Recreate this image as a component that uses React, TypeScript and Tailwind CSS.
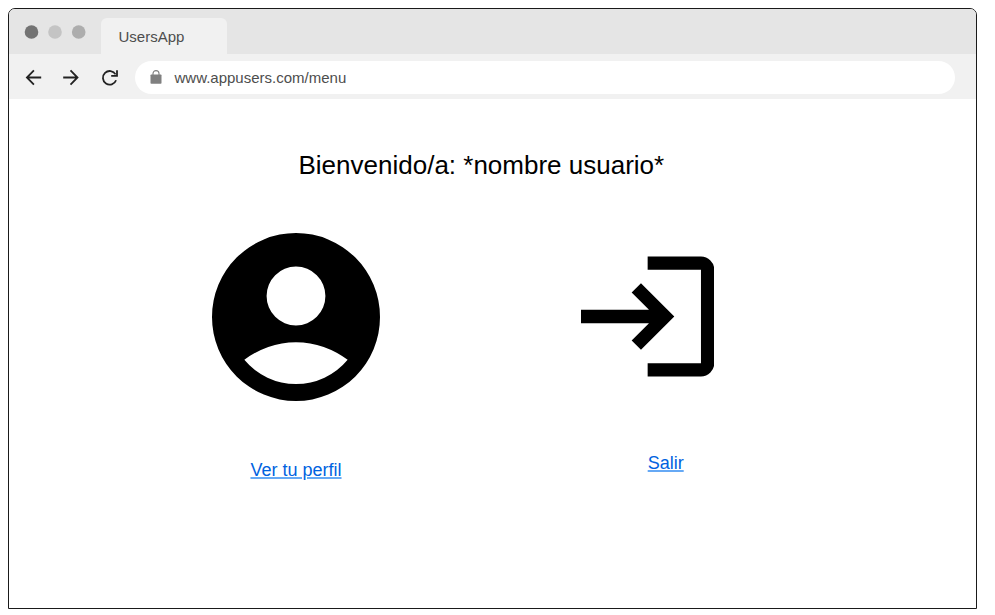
import React from "react";

function TitleBar() {
  return (
    <div className="flex h-[45px] items-end bg-[#e5e5e5] pl-[15px]">
      <svg className="h-[45px] w-[77px] shrink-0" viewBox="0 0 77 45">
        <circle cx="7.5" cy="23" r="6.8" fill="#737373" />
        <circle cx="31" cy="23" r="6.8" fill="#c4c4c4" />
        <circle cx="54.7" cy="23" r="6.8" fill="#adadad" />
      </svg>
      <div className="flex h-[36px] w-[126px] items-center rounded-t-[6px] bg-[#f1f1f1] pl-[17.5px] pt-[2px] text-[15px] leading-[18px] text-[#4d4d4d]">
        UsersApp
      </div>
    </div>
  );
}

function Toolbar() {
  return (
    <div className="flex h-[44.5px] items-start bg-[#f1f1f1] pl-[15px]">
      <svg className="h-[44px] w-[110.5px] shrink-0" viewBox="24 54 110.5 44" fill="none" stroke="#222222" strokeWidth="1.8">
        <path d="M41.2 77.5H27.2M33.9 70.3L26.9 77.5L33.9 84.7" />
        <path d="M63.2 77.5H77.2M70.5 70.3L77.5 77.5L70.5 84.7" />
        <path d="M116.1 80.2A6.8 6.8 0 1 1 115.6 74.4" />
        <path d="M117 70.2V75.9H111.2" />
      </svg>
      <div className="mt-[6.5px] flex h-[33px] w-[820px] items-center rounded-full bg-white pl-[15px] text-[15px] leading-[18px] text-[#4d4d4d]">
        <svg className="mb-px mr-[13px] h-[14px] w-[12px] shrink-0" viewBox="0 0 12 14">
          <rect x="0.5" y="4.5" width="11" height="9.2" rx="0.8" fill="#808080" />
          <path d="M3 5V3.6a3 3 0 0 1 6 0V5" fill="none" stroke="#808080" strokeWidth="1.1" />
        </svg>
        <span className="pt-[2px]">www.appusers.com/menu</span>
      </div>
    </div>
  );
}

export default function App() {
  return (
    <div className="h-[615px] w-[995px] overflow-hidden bg-white pl-[8px] pt-[8px] font-['Liberation_Sans',Arial,sans-serif]">
      <div className="h-[601px] w-[969px] overflow-hidden rounded-t-[7px] border border-[#1a1a1a] bg-white">
        <TitleBar />
        <Toolbar />
        <main>
          <h1 className="ml-[289.5px] mt-[51.5px] w-max text-[26px] leading-[30px] text-black">
            Bienvenido/a: *nombre usuario*
          </h1>
          <div className="ml-[203px] mt-[53px] flex items-start">
            <div className="flex w-[168px] flex-col items-center">
              <svg className="h-[168px] w-[168px]" viewBox="2 2 20 20">
                <path
                  fillRule="evenodd"
                  d="M12 2a10 10 0 1 0 0 20a10 10 0 0 0 0-20zM12 6a3.5 3.5 0 1 1 0 7a3.5 3.5 0 0 1 0-7zM5.85 17.1q1.275-.975 2.85-1.538T12 15t3.3.563t2.85 1.537A8 8 0 0 1 5.85 17.1z"
                />
              </svg>
              <a className="mt-[59px] text-[18px] leading-[20px] text-[#0062e0] underline decoration-[#66a9f5] decoration-2 underline-offset-[1px]">
                Ver tu perfil
              </a>
            </div>
            <div className="ml-[200.7px] mt-[23.3px] w-[133.3px]">
              <svg className="h-[121px] w-[133.3px]" viewBox="0 -0.075 20 18.15">
                <path d="M10 0h8a2 2 0 0 1 2 2v14a2 2 0 0 1-2 2h-8v-2h8V2h-8zM9 4l5 5l-5 5l-1.4-1.4L10.2 10H0V8h10.2L7.6 5.4z" />
              </svg>
              <a className="ml-[67px] mt-[75.7px] block w-max text-[18px] leading-[20px] text-[#0062e0] underline decoration-[#66a9f5] decoration-2 underline-offset-[1px]">
                Salir
              </a>
            </div>
          </div>
        </main>
      </div>
    </div>
  );
}
